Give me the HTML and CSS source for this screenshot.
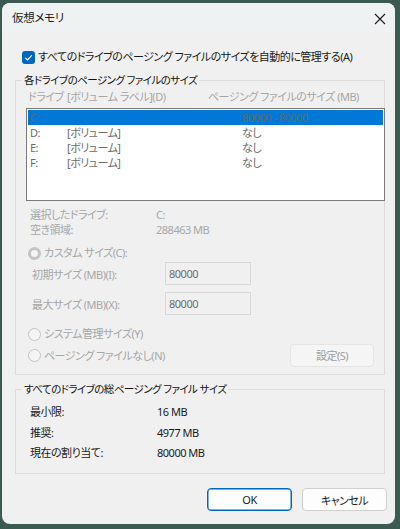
FILE: index.html
```html
<!DOCTYPE html>
<html lang="ja">
<head>
<meta charset="utf-8">
<link rel="stylesheet" href="styles.css">
</head>
<body>
<div class="window">
  <div class="titlebar">
    <span class="title">仮想メモリ</span>
    <svg class="close" width="12" height="12" viewBox="0 0 12 12"><path d="M1 1L11 11M11 1L1 11" stroke="#1b1b1b" stroke-width="1.1" fill="none"/></svg>
  </div>
  <div class="content">
    <label class="auto-row">
      <span class="checkbox"><svg width="13" height="13" viewBox="0 0 13 13"><path d="M3.3 6.8L5.5 9L9.8 4.4" stroke="#fff" stroke-width="1.1" fill="none"/></svg></span>
      <span>すべてのドライブのページング ファイルのサイズを自動的に管理する(A)</span>
    </label>

    <fieldset class="group group1">
      <legend>各ドライブのページング ファイルのサイズ</legend>
      <div class="list-header">
        <span>ドライブ</span><span>[ボリューム ラベル](D)</span><span>ページング ファイルのサイズ (MB)</span>
      </div>
      <div class="listbox">
        <div class="lrow selected"><span>C:</span><span></span><span>80000 - 80000</span></div>
        <div class="lrow"><span>D:</span><span>[ボリューム]</span><span>なし</span></div>
        <div class="lrow"><span>E:</span><span>[ボリューム]</span><span>なし</span></div>
        <div class="lrow"><span>F:</span><span>[ボリューム]</span><span>なし</span></div>
      </div>
      <div class="info">
        <span>選択したドライブ:</span><span>C:</span>
        <span>空き領域:</span><span>288463 MB</span>
      </div>
      <div class="radio-row custom"><span class="radio checked"></span><span>カスタム サイズ(C):</span></div>
      <div class="size-row first"><span class="size-label">初期サイズ (MB)(I):</span><span class="input">80000</span></div>
      <div class="size-row"><span class="size-label">最大サイズ (MB)(X):</span><span class="input">80000</span></div>
      <div class="radio-row system"><span class="radio"></span><span>システム管理サイズ(Y)</span></div>
      <div class="radio-row none">
        <span class="radio"></span><span>ページング ファイルなし(N)</span>
        <span class="btn set">設定(S)</span>
      </div>
    </fieldset>

    <fieldset class="group group2">
      <legend>すべてのドライブの総ページング ファイル サイズ</legend>
      <div class="totals">
        <span>最小限:</span><span>16 MB</span>
        <span>推奨:</span><span>4977 MB</span>
        <span>現在の割り当て:</span><span>80000 MB</span>
      </div>
    </fieldset>

    <div class="buttons">
      <span class="btn ok">OK</span>
      <span class="btn cancel">キャンセル</span>
    </div>
  </div>
</div>
</body>
</html>
```

FILE: styles.css
```css
html, body {
  margin: 0;
  padding: 0;
}
body {
  background: #3b5a52;
  width: 400px;
  height: 529px;
  overflow: hidden;
  font-family: "Noto Sans", "Noto Sans CJK JP", sans-serif;
  font-size: 11px;
  letter-spacing: -0.5px;
  font-feature-settings: "palt" 1;
  color: #1a1a1a;
  white-space: nowrap;
}
.window {
  margin: 3px 0 0 2px;
  width: 393px;
  height: 521px;
  background: #f0f0f0;
  border-radius: 8px;
  overflow: hidden;
  box-sizing: border-box;
}
.titlebar {
  height: 29px;
  background: #eef2f2;
  display: flex;
  align-items: center;
  justify-content: space-between;
  padding: 0 8px 0 10px;
}
.title {
  font-size: 11.5px;
  letter-spacing: -0.3px;
  line-height: 16px;
  padding-top: 1px;
}
.close {
  display: block;
  margin-right: 1px;
  margin-top: 2px;
}
.content {
  padding: 0 10px 0 13px;
}
.auto-row {
  display: flex;
  align-items: center;
  gap: 3px;
  height: 16px;
  margin-top: 17px;
  padding-left: 7px;
  line-height: 16px;
}
.checkbox {
  width: 13px;
  height: 13px;
  border-radius: 3px;
  background: #0067c0;
  display: block;
  flex: none;
}
.checkbox svg { display: block; }

.group {
  margin: 0;
  border: 1px solid #dcdcdc;
  min-width: 0;
}
.group legend {
  padding: 0 2px;
  line-height: 16px;
  font-size: 10.5px;
  letter-spacing: -0.55px;
  color: #111;
}
.group1 {
  margin-top: 7px;
  padding: 1px 0 0 10px;
  height: 303px;
  box-sizing: border-box;
}
.group1 legend {
  margin-left: -4px;
}
.list-header {
  display: grid;
  grid-template-columns: 39px 141px 1fr;
  line-height: 16px;
  color: #a6a6a6;
  padding-left: 2px;
}
.listbox {
  margin-top: 3px;
  margin-right: -1px;
  height: 93px;
  box-sizing: border-box;
  border: 1px solid #7a7a7a;
  background: #fff;
  padding: 1px;
}
.lrow {
  display: grid;
  grid-template-columns: 37px 175px 1fr;
  height: 15px;
  line-height: 15px;
  padding-left: 2px;
  color: #6d6d6d;
}
.lrow.selected {
  background: #0078d7;
  color: #5e6a75;
}
.info {
  display: grid;
  grid-template-columns: 126px 1fr;
  line-height: 15px;
  color: #a6a6a6;
  margin-top: 6px;
  padding-left: 4px;
}
.radio-row {
  display: flex;
  align-items: center;
  gap: 3px;
  height: 16px;
  line-height: 16px;
  color: #a6a6a6;
  padding-left: 2px;
}
.radio {
  width: 11px;
  height: 11px;
  border-radius: 50%;
  border: 1px solid #c4c4c4;
  background: #f5f5f5;
  flex: none;
}
.radio.checked {
  background: #f5f5f5;
  border: 3px solid #c4c4c4;
  width: 7px;
  height: 7px;
}
.custom {
  margin-top: 8px;
}
.size-row {
  display: flex;
  align-items: center;
  height: 23px;
  margin-top: 7px;
  color: #a6a6a6;
  padding-left: 6px;
}
.size-row.first {
  margin-top: 1px;
}
.size-label {
  width: 133px;
}
.input {
  width: 86px;
  height: 23px;
  box-sizing: border-box;
  border: 1px solid #d7d7d7;
  padding: 0 3px;
  line-height: 21px;
  color: #6d6d6d;
}
.system {
  margin-top: 11px;
}
.none {
  margin-top: 2px;
  height: 23px;
}
.btn {
  display: flex;
  align-items: center;
  justify-content: center;
  box-sizing: border-box;
  height: 23px;
  border-radius: 4px;
  background: #fdfdfd;
  border: 1px solid #d0d0d0;
  color: #1a1a1a;
}
.btn.set {
  margin-left: auto;
  margin-right: 10px;
  width: 84px;
  background: #f5f5f5;
  border-color: #e5e5e5;
  color: #9d9d9d;
}
.group2 {
  margin-top: 6px;
  padding: 7px 0 0 14px;
  height: 93px;
  box-sizing: border-box;
}
.group2 legend {
  margin-left: -8px;
}
.totals {
  display: grid;
  grid-template-columns: 127px 1fr;
  row-gap: 4.5px;
  line-height: 16px;
}
.buttons {
  display: flex;
  justify-content: flex-end;
  gap: 10px;
  margin-top: 14px;
  margin-right: -2px;
}
.buttons .btn {
  width: 85px;
}
.btn.ok {
  border: 1px solid #0067c0;
  box-shadow: inset 0 0 0 0.5px #0067c0;
}
```
